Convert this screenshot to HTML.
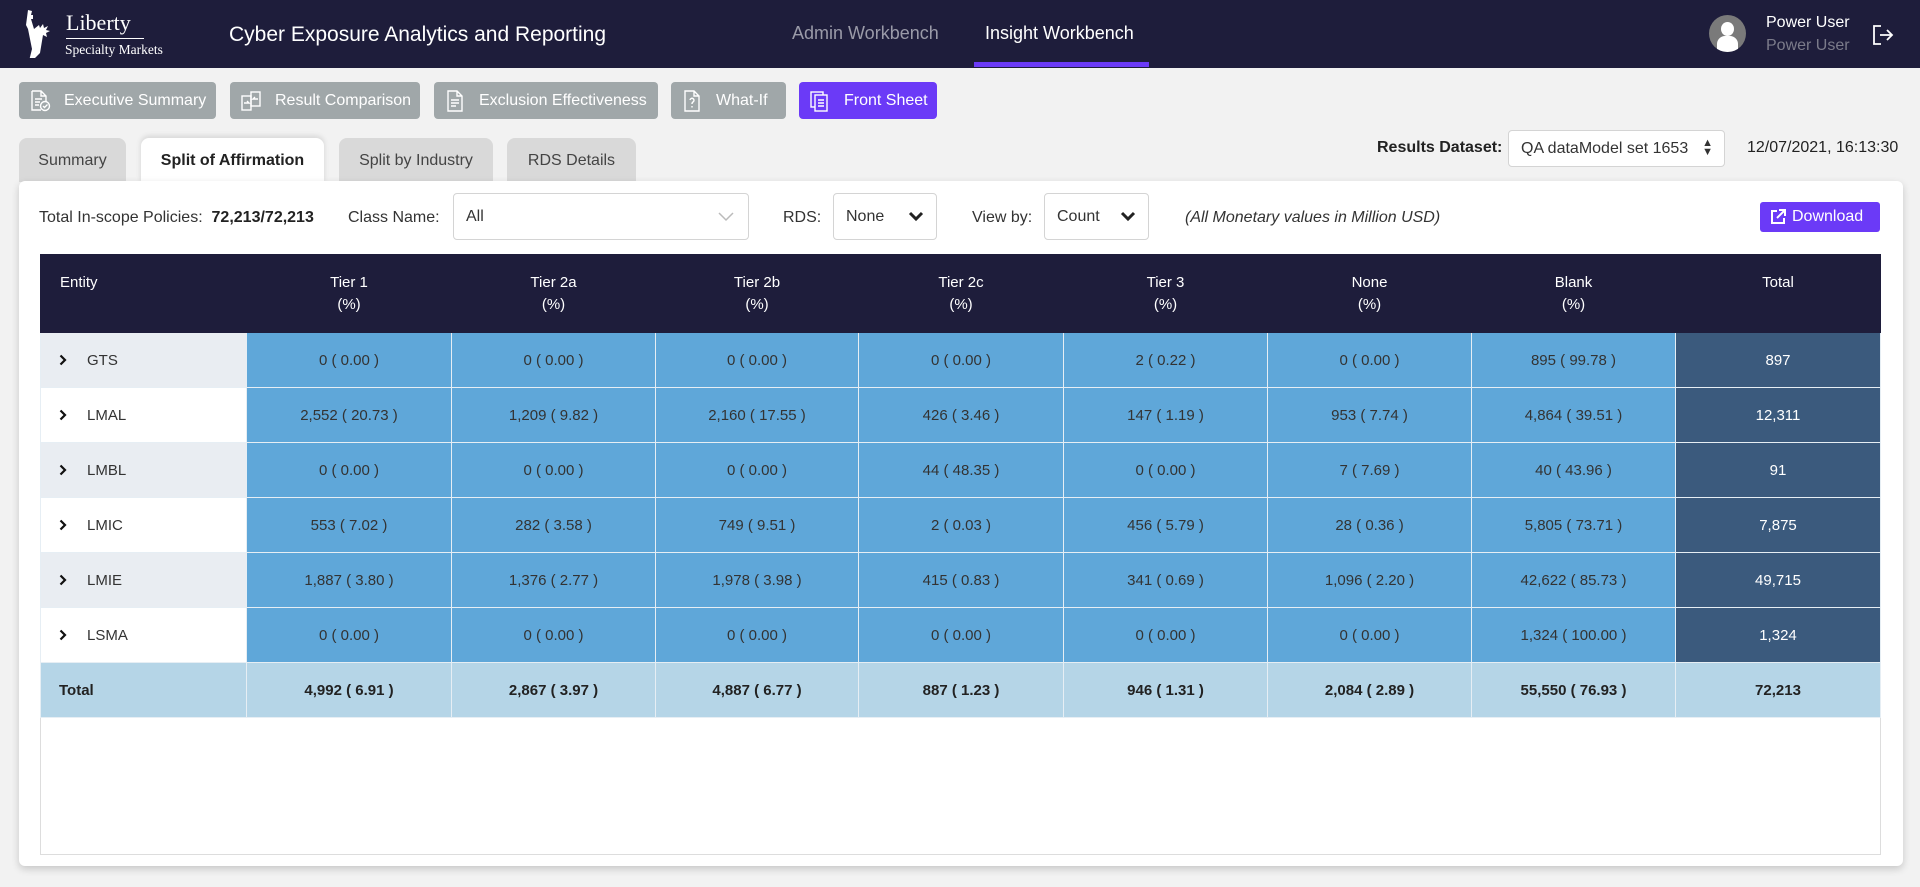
<!DOCTYPE html>
<html><head><meta charset="utf-8"><style>
*{box-sizing:border-box;margin:0;padding:0}
body{width:1920px;height:887px;background:#f2f2f2;font-family:"Liberation Sans",sans-serif;position:relative;overflow:hidden;color:#333}
.abs{position:absolute}
.hdr{left:0;top:0;width:1920px;height:68px;background:#1e1d3b}
.btn{top:82px;height:37px;border-radius:4px;background:#a0a7a9;color:#fff;font-size:16px;line-height:37px;padding-left:45px}
.btn svg{position:absolute;left:10px;top:8px}
.tab{top:138px;height:44px;border-radius:8px 8px 0 0;background:#d9d9d9;font-size:16px;line-height:46px;text-align:center;color:#444}
.panel{left:19px;top:181px;width:1884px;height:685px;background:#fff;border-radius:6px;box-shadow:0 3px 8px rgba(0,0,0,.18)}
.sel{height:47px;border:1px solid #d4d4d4;border-radius:4px;background:#fff;font-size:16px;line-height:45px;padding-left:12px;color:#333}
table{position:absolute;left:40px;top:254px;border-collapse:collapse;font-size:15px;table-layout:fixed}
td,th{height:55px;text-align:center;border:1px solid #e6eef4}
th{background:#1e1d3b;color:#fff;font-weight:normal;height:78px;line-height:22px;border-color:#1e1d3b}
td.c{background:#5fa7d9;color:#333}
td.t{background:#3b5a7d;color:#fff}
td.e{text-align:left;padding-left:18px;color:#333}
td.e svg{vertical-align:-1px;margin-right:20px}
tr.tot td{background:#b5d5e7;font-weight:bold;color:#222}
</style></head><body>
<div class="abs hdr"></div>
<svg class="abs" style="left:22px;top:8px" width="36" height="50" viewBox="0 0 36 50"><path d="M6 2 l4 1 -1 4 2 0 0 4 -2 0 3 10 5-4 1 3 3-4 1 4 4-2-2 4 4 1-4 2 1 4-4-2-1 6 -2 12 -8 8 -3 0 3-12 -4-20 -2-4z" fill="#fff"/></svg>
<div class="abs" style="left:66px;top:11px;color:#fff;font-family:'Liberation Serif',serif;font-size:22px;line-height:24px">Liberty</div>
<div class="abs" style="left:66px;top:38px;width:78px;border-top:1px solid #fff"></div>
<div class="abs" style="left:65px;top:42px;color:#fff;font-family:'Liberation Serif',serif;font-size:13.5px">Specialty Markets</div>
<div class="abs" style="left:229px;top:23px;color:#fff;font-size:21px">Cyber Exposure Analytics and Reporting</div>
<div class="abs" style="left:792px;top:23px;color:#9a9aa8;font-size:18px">Admin Workbench</div>
<div class="abs" style="left:985px;top:23px;color:#fff;font-size:18px">Insight Workbench</div>
<div class="abs" style="left:974px;top:62px;width:175px;height:5px;background:#6b3af7"></div>
<div class="abs" style="left:1709px;top:15px;width:37px;height:37px;border-radius:50%;background:#7a7a7a;overflow:hidden"><div class="abs" style="left:12px;top:7px;width:13px;height:14px;border-radius:50%;background:#fff"></div><div class="abs" style="left:8px;top:21px;width:21px;height:16px;border-radius:8px 8px 0 0;background:#fff"></div></div>
<div class="abs" style="left:1766px;top:14px;color:#fff;font-size:16px">Power User</div>
<div class="abs" style="left:1766px;top:37px;color:#7b7b8a;font-size:16px">Power User</div>
<svg class="abs" style="left:1872px;top:24px" width="22" height="22" viewBox="0 0 22 22" fill="none" stroke="#fff" stroke-width="1.8"><path d="M9 2H2v18h7M8 11h12M15 6l5 5-5 5"/></svg>

<div class="abs btn" style="left:19px;width:197px"><svg width="22" height="22" viewBox="0 0 22 22" fill="none" stroke="#fff" stroke-width="1.4"><path d="M3 1h9l5 5v6M3 1v19h9M12 1v5h5M6 9h7M6 12h5M6 15h4"/><circle cx="16" cy="16" r="4.5"/><path d="M14 16l1.5 1.5 3-3"/></svg>Executive Summary</div>
<div class="abs btn" style="left:230px;width:190px"><svg width="22" height="22" viewBox="0 0 22 22" fill="none" stroke="#fff" stroke-width="1.4"><rect x="2" y="6" width="9" height="14"/><rect x="11" y="2" width="9" height="14"/><path d="M4 13h5l-2-2M18 9h-5l2-2"/></svg>Result Comparison</div>
<div class="abs btn" style="left:434px;width:224px"><svg width="22" height="22" viewBox="0 0 22 22" fill="none" stroke="#fff" stroke-width="1.4"><path d="M4 1h9l5 5v15H4zM13 1v5h5M7 10h8M7 13h8M7 16h5"/></svg>Exclusion Effectiveness</div>
<div class="abs btn" style="left:671px;width:115px"><svg width="22" height="22" viewBox="0 0 22 22" fill="none" stroke="#fff" stroke-width="1.4"><path d="M4 1h9l5 5v15H4zM13 1v5h5M9 10a2 2 0 1 1 3 2c-1 .5-1 1-1 2M11 16v1.5"/></svg>What-If</div>
<div class="abs btn" style="left:799px;width:138px;background:#6b3af7"><svg width="22" height="22" viewBox="0 0 22 22" fill="none" stroke="#fff" stroke-width="1.4"><rect x="2" y="2" width="12" height="15"/><rect x="6" y="5" width="12" height="16" fill="#6b3af7"/><path d="M9 10h6M9 13h6M9 16h6"/></svg>Front Sheet</div>

<div class="abs tab" style="left:19px;width:107px">Summary</div>
<div class="abs tab" style="left:141px;width:183px;background:#fff;font-weight:bold;color:#222;height:46px;box-shadow:0 -2px 6px rgba(0,0,0,.12)">Split of Affirmation</div>
<div class="abs tab" style="left:339px;width:154px">Split by Industry</div>
<div class="abs tab" style="left:507px;width:129px">RDS Details</div>
<div class="abs" style="left:1377px;top:139px;font-size:16px;font-weight:bold;color:#222">Results Dataset:</div>
<div class="abs sel" style="left:1508px;top:130px;width:217px;height:37px;line-height:35px;font-size:16px">QA dataModel set 1653<span class="abs" style="right:11px;top:0;font-size:11px;line-height:9px;padding-top:8px;color:#333">▲<br>▼</span></div>
<div class="abs" style="left:1747px;top:139px;font-size:16px;color:#222">12/07/2021, 16:13:30</div>

<div class="abs panel"></div>
<div class="abs" style="left:39px;top:209px;font-size:16px">Total In-scope Policies:&nbsp; <b style="color:#222">72,213/72,213</b></div>
<div class="abs" style="left:348px;top:209px;font-size:16px">Class Name:</div>
<div class="abs sel" style="left:453px;top:193px;width:296px">All<svg class="abs" style="right:14px;top:18px" width="16" height="10" viewBox="0 0 16 10" fill="none" stroke="#bbb" stroke-width="1.5"><path d="M1 1l7 7 7-7"/></svg></div>
<div class="abs" style="left:783px;top:209px;font-size:16px">RDS:</div>
<div class="abs sel" style="left:833px;top:193px;width:104px">None<svg class="abs" style="right:12px;top:17px" width="16" height="11" viewBox="0 0 16 11" fill="none" stroke="#222" stroke-width="3"><path d="M2 2l6 6 6-6"/></svg></div>
<div class="abs" style="left:972px;top:209px;font-size:16px">View by:</div>
<div class="abs sel" style="left:1044px;top:193px;width:105px">Count<svg class="abs" style="right:12px;top:17px" width="16" height="11" viewBox="0 0 16 11" fill="none" stroke="#222" stroke-width="3"><path d="M2 2l6 6 6-6"/></svg></div>
<div class="abs" style="left:1185px;top:209px;font-size:16px;font-style:italic">(All Monetary values in Million USD)</div>
<div class="abs" style="left:1760px;top:202px;width:120px;height:30px;background:#6b3af7;border-radius:3px;color:#fff;font-size:16px;line-height:30px;padding-left:32px"><svg class="abs" style="left:10px;top:7px" width="16" height="16" viewBox="0 0 16 16" fill="none" stroke="#fff" stroke-width="2"><path d="M7 2H2v12h12V9M9 1h6v6M15 1L7 9"/></svg>Download</div>
<div class="abs" style="left:40px;top:254px;width:1841px;height:601px;border:1px solid #ddd"></div>

<table>
<colgroup><col style="width:206px"><col style="width:205px"><col style="width:204px"><col style="width:203px"><col style="width:205px"><col style="width:204px"><col style="width:204px"><col style="width:204px"><col style="width:205px"></colgroup>
<tr><th style="text-align:left;padding-left:19px;vertical-align:top;padding-top:17px">Entity</th><th style="vertical-align:top;padding-top:17px">Tier 1<br>(%)</th><th style="vertical-align:top;padding-top:17px">Tier 2a<br>(%)</th><th style="vertical-align:top;padding-top:17px">Tier 2b<br>(%)</th><th style="vertical-align:top;padding-top:17px">Tier 2c<br>(%)</th><th style="vertical-align:top;padding-top:17px">Tier 3<br>(%)</th><th style="vertical-align:top;padding-top:17px">None<br>(%)</th><th style="vertical-align:top;padding-top:17px">Blank<br>(%)</th><th style="vertical-align:top;padding-top:17px">Total</th></tr>
<tr><td class="e" style="background:#e9edf2"><svg width="8" height="12" viewBox="0 0 8 12" fill="none" stroke="#111" stroke-width="2.2"><path d="M1.5 1.5l4.5 4.5-4.5 4.5"/></svg>GTS</td><td class="c">0 ( 0.00 )</td><td class="c">0 ( 0.00 )</td><td class="c">0 ( 0.00 )</td><td class="c">0 ( 0.00 )</td><td class="c">2 ( 0.22 )</td><td class="c">0 ( 0.00 )</td><td class="c">895 ( 99.78 )</td><td class="t">897</td></tr>
<tr><td class="e" style="background:#fff"><svg width="8" height="12" viewBox="0 0 8 12" fill="none" stroke="#111" stroke-width="2.2"><path d="M1.5 1.5l4.5 4.5-4.5 4.5"/></svg>LMAL</td><td class="c">2,552 ( 20.73 )</td><td class="c">1,209 ( 9.82 )</td><td class="c">2,160 ( 17.55 )</td><td class="c">426 ( 3.46 )</td><td class="c">147 ( 1.19 )</td><td class="c">953 ( 7.74 )</td><td class="c">4,864 ( 39.51 )</td><td class="t">12,311</td></tr>
<tr><td class="e" style="background:#e9edf2"><svg width="8" height="12" viewBox="0 0 8 12" fill="none" stroke="#111" stroke-width="2.2"><path d="M1.5 1.5l4.5 4.5-4.5 4.5"/></svg>LMBL</td><td class="c">0 ( 0.00 )</td><td class="c">0 ( 0.00 )</td><td class="c">0 ( 0.00 )</td><td class="c">44 ( 48.35 )</td><td class="c">0 ( 0.00 )</td><td class="c">7 ( 7.69 )</td><td class="c">40 ( 43.96 )</td><td class="t">91</td></tr>
<tr><td class="e" style="background:#fff"><svg width="8" height="12" viewBox="0 0 8 12" fill="none" stroke="#111" stroke-width="2.2"><path d="M1.5 1.5l4.5 4.5-4.5 4.5"/></svg>LMIC</td><td class="c">553 ( 7.02 )</td><td class="c">282 ( 3.58 )</td><td class="c">749 ( 9.51 )</td><td class="c">2 ( 0.03 )</td><td class="c">456 ( 5.79 )</td><td class="c">28 ( 0.36 )</td><td class="c">5,805 ( 73.71 )</td><td class="t">7,875</td></tr>
<tr><td class="e" style="background:#e9edf2"><svg width="8" height="12" viewBox="0 0 8 12" fill="none" stroke="#111" stroke-width="2.2"><path d="M1.5 1.5l4.5 4.5-4.5 4.5"/></svg>LMIE</td><td class="c">1,887 ( 3.80 )</td><td class="c">1,376 ( 2.77 )</td><td class="c">1,978 ( 3.98 )</td><td class="c">415 ( 0.83 )</td><td class="c">341 ( 0.69 )</td><td class="c">1,096 ( 2.20 )</td><td class="c">42,622 ( 85.73 )</td><td class="t">49,715</td></tr>
<tr><td class="e" style="background:#fff"><svg width="8" height="12" viewBox="0 0 8 12" fill="none" stroke="#111" stroke-width="2.2"><path d="M1.5 1.5l4.5 4.5-4.5 4.5"/></svg>LSMA</td><td class="c">0 ( 0.00 )</td><td class="c">0 ( 0.00 )</td><td class="c">0 ( 0.00 )</td><td class="c">0 ( 0.00 )</td><td class="c">0 ( 0.00 )</td><td class="c">0 ( 0.00 )</td><td class="c">1,324 ( 100.00 )</td><td class="t">1,324</td></tr>
<tr class="tot"><td class="e">Total</td><td>4,992 ( 6.91 )</td><td>2,867 ( 3.97 )</td><td>4,887 ( 6.77 )</td><td>887 ( 1.23 )</td><td>946 ( 1.31 )</td><td>2,084 ( 2.89 )</td><td>55,550 ( 76.93 )</td><td>72,213</td></tr>
</table>
</body></html>
